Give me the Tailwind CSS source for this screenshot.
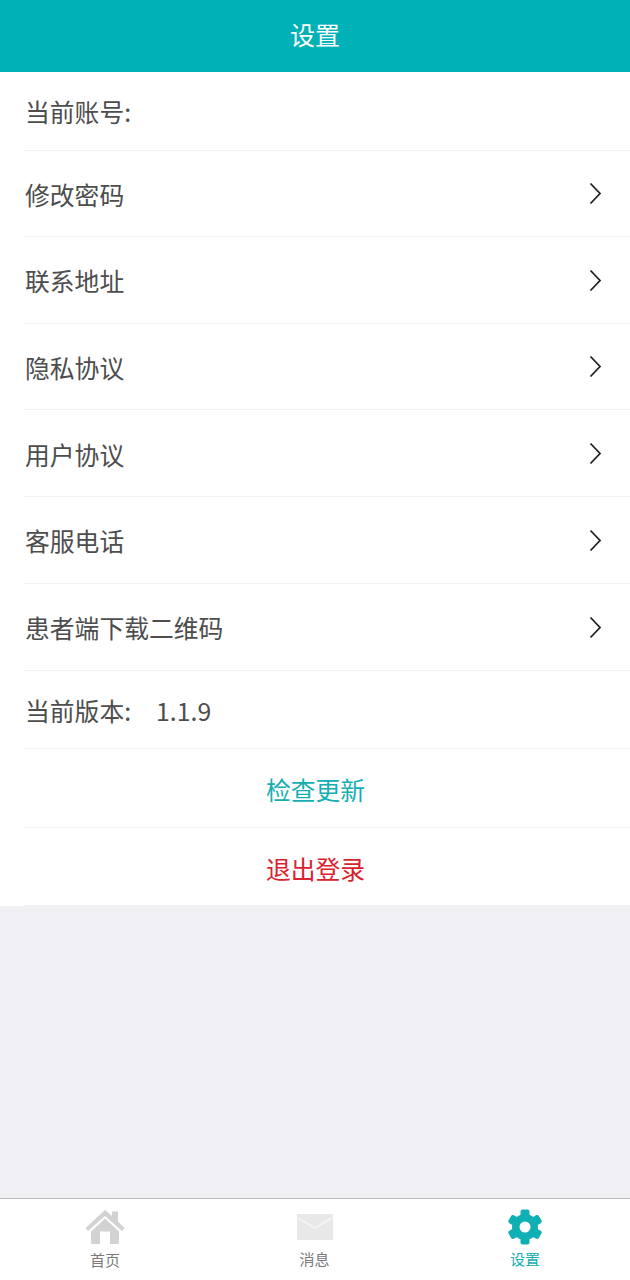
<!doctype html>
<html lang="zh-CN">
<head>
<meta charset="utf-8">
<script src="https://cdn.jsdelivr.net/npm/@tailwindcss/browser@4"></script>
</head>
<body class="m-0 bg-[#efeff4] font-['Noto_Sans_CJK_SC','Noto_Sans',sans-serif]">
<div class="flex h-[1280px] w-[630px] flex-col overflow-hidden">
  <header class="flex h-[72px] shrink-0 items-center justify-center bg-[#00b1b7] pb-[3px] text-[25px] text-white">设置</header>
  <main class="flex-1 bg-[#efeff4]">
    <div class="bg-white pl-[24px] text-[24.8px] leading-none text-[#4d4d4d]">
      <div class="flex h-[79px] items-center border-b border-[#f1f1f1] pl-px pt-[1px]">当前账号:</div>
      <div class="flex h-[86px] items-center justify-between border-b border-[#f1f1f1] pl-px pr-[27px]"><span class="pt-[2px]">修改密码</span><svg class="mt-[1px] h-6 w-4" viewBox="0 0 16 24" fill="none" stroke="#222" stroke-width="1.8"><path d="M3.500 1.500 L13 11.500 L3.500 21.500"/></svg></div>
      <div class="flex h-[87px] items-center justify-between border-b border-[#f1f1f1] pl-px pr-[27px]"><span class="pt-[1px]">联系地址</span><svg class="mt-[1px] h-6 w-4" viewBox="0 0 16 24" fill="none" stroke="#222" stroke-width="1.8"><path d="M3.500 1.500 L13 11.500 L3.500 21.500"/></svg></div>
      <div class="flex h-[86px] items-center justify-between border-b border-[#f1f1f1] pl-px pr-[27px]"><span class="pt-[2px]">隐私协议</span><svg class="mt-[1px] h-6 w-4" viewBox="0 0 16 24" fill="none" stroke="#222" stroke-width="1.8"><path d="M3.500 1.500 L13 11.500 L3.500 21.500"/></svg></div>
      <div class="flex h-[87px] items-center justify-between border-b border-[#f1f1f1] pl-px pr-[27px]"><span class="pt-[2px]">用户协议</span><svg class="mt-[2px] h-6 w-4" viewBox="0 0 16 24" fill="none" stroke="#222" stroke-width="1.8"><path d="M3.500 1.500 L13 11.500 L3.500 21.500"/></svg></div>
      <div class="flex h-[87px] items-center justify-between border-b border-[#f1f1f1] pl-px pr-[27px]"><span class="pt-[1px]">客服电话</span><svg class="mt-[1px] h-6 w-4" viewBox="0 0 16 24" fill="none" stroke="#222" stroke-width="1.8"><path d="M3.500 1.500 L13 11.500 L3.500 21.500"/></svg></div>
      <div class="flex h-[87px] items-center justify-between border-b border-[#f1f1f1] pl-px pr-[27px]"><span class="pt-[1px]">患者端下载二维码</span><svg class="mt-[1px] h-6 w-4" viewBox="0 0 16 24" fill="none" stroke="#222" stroke-width="1.8"><path d="M3.500 1.500 L13 11.500 L3.500 21.500"/></svg></div>
      <div class="flex h-[78px] items-center gap-[25px] border-b border-[#f1f1f1] pl-px pt-[2px]"><span>当前版本:</span><span>1.1.9</span></div>
      <div class="flex h-[79px] items-center justify-center border-b border-[#f1f1f1] pt-[3px] pr-[23px] text-[#14aeb3]">检查更新</div>
      <div class="flex h-[78px] items-center justify-center border-b border-[#eeeef2] pt-[3px] pr-[23px] text-[#d9232e]">退出登录</div>
    </div>
  </main>
  <nav class="flex h-[82px] shrink-0 border-t-[1.5px] border-[#b8b8bc] bg-white text-[15px] leading-none">
    <div class="flex w-[210px] flex-col items-center pt-[11px] text-[#7a7a7a]">
      <svg class="h-[36px] w-[40px]" viewBox="0 0 40 36"><path fill="#d2d2d2" d="M20 0 L27 6 V1.500 H33 V11.500 L39.500 18 L37 21 L20 6 L3 21 L0.500 18 Z"/><path fill="#d2d2d2" d="M6 21.500 L20 8.500 L34 21.500 V32.500 A1.500 1.500 0 0 1 32.500 34 H25 V21.500 H15 V34 H7.500 A1.500 1.500 0 0 1 6 32.500 Z"/></svg>
      <span class="mt-[6px]">首页</span>
    </div>
    <div class="flex w-[210px] flex-col items-center pt-[15px] text-[#7a7a7a]">
      <svg class="h-[26px] w-[36px]" viewBox="0 0 36 26"><path fill="#e8e8e8" d="M0 0H36V26H0Z"/><path fill="none" stroke="#f6f6f6" stroke-width="1.600" d="M1 4 L18 14 L35 4"/></svg>
      <span class="mt-[11px] -ml-[1px]">消息</span>
    </div>
    <div class="flex w-[210px] flex-col items-center pt-[10px] text-[#14aeb3]">
      <svg class="h-[36px] w-[36px]" viewBox="0 0 36 36"><g fill="#0fb0b5"><rect x="13.500" y="0.500" width="9" height="35" rx="2"/><rect x="13.500" y="0.500" width="9" height="35" rx="2" transform="rotate(60 18 18)"/><rect x="13.500" y="0.500" width="9" height="35" rx="2" transform="rotate(120 18 18)"/><circle cx="18" cy="18" r="13"/></g><circle cx="18" cy="18" r="5.500" fill="#fff"/></svg>
      <span class="mt-[6px]">设置</span>
    </div>
  </nav>
</div>
</body>
</html>
